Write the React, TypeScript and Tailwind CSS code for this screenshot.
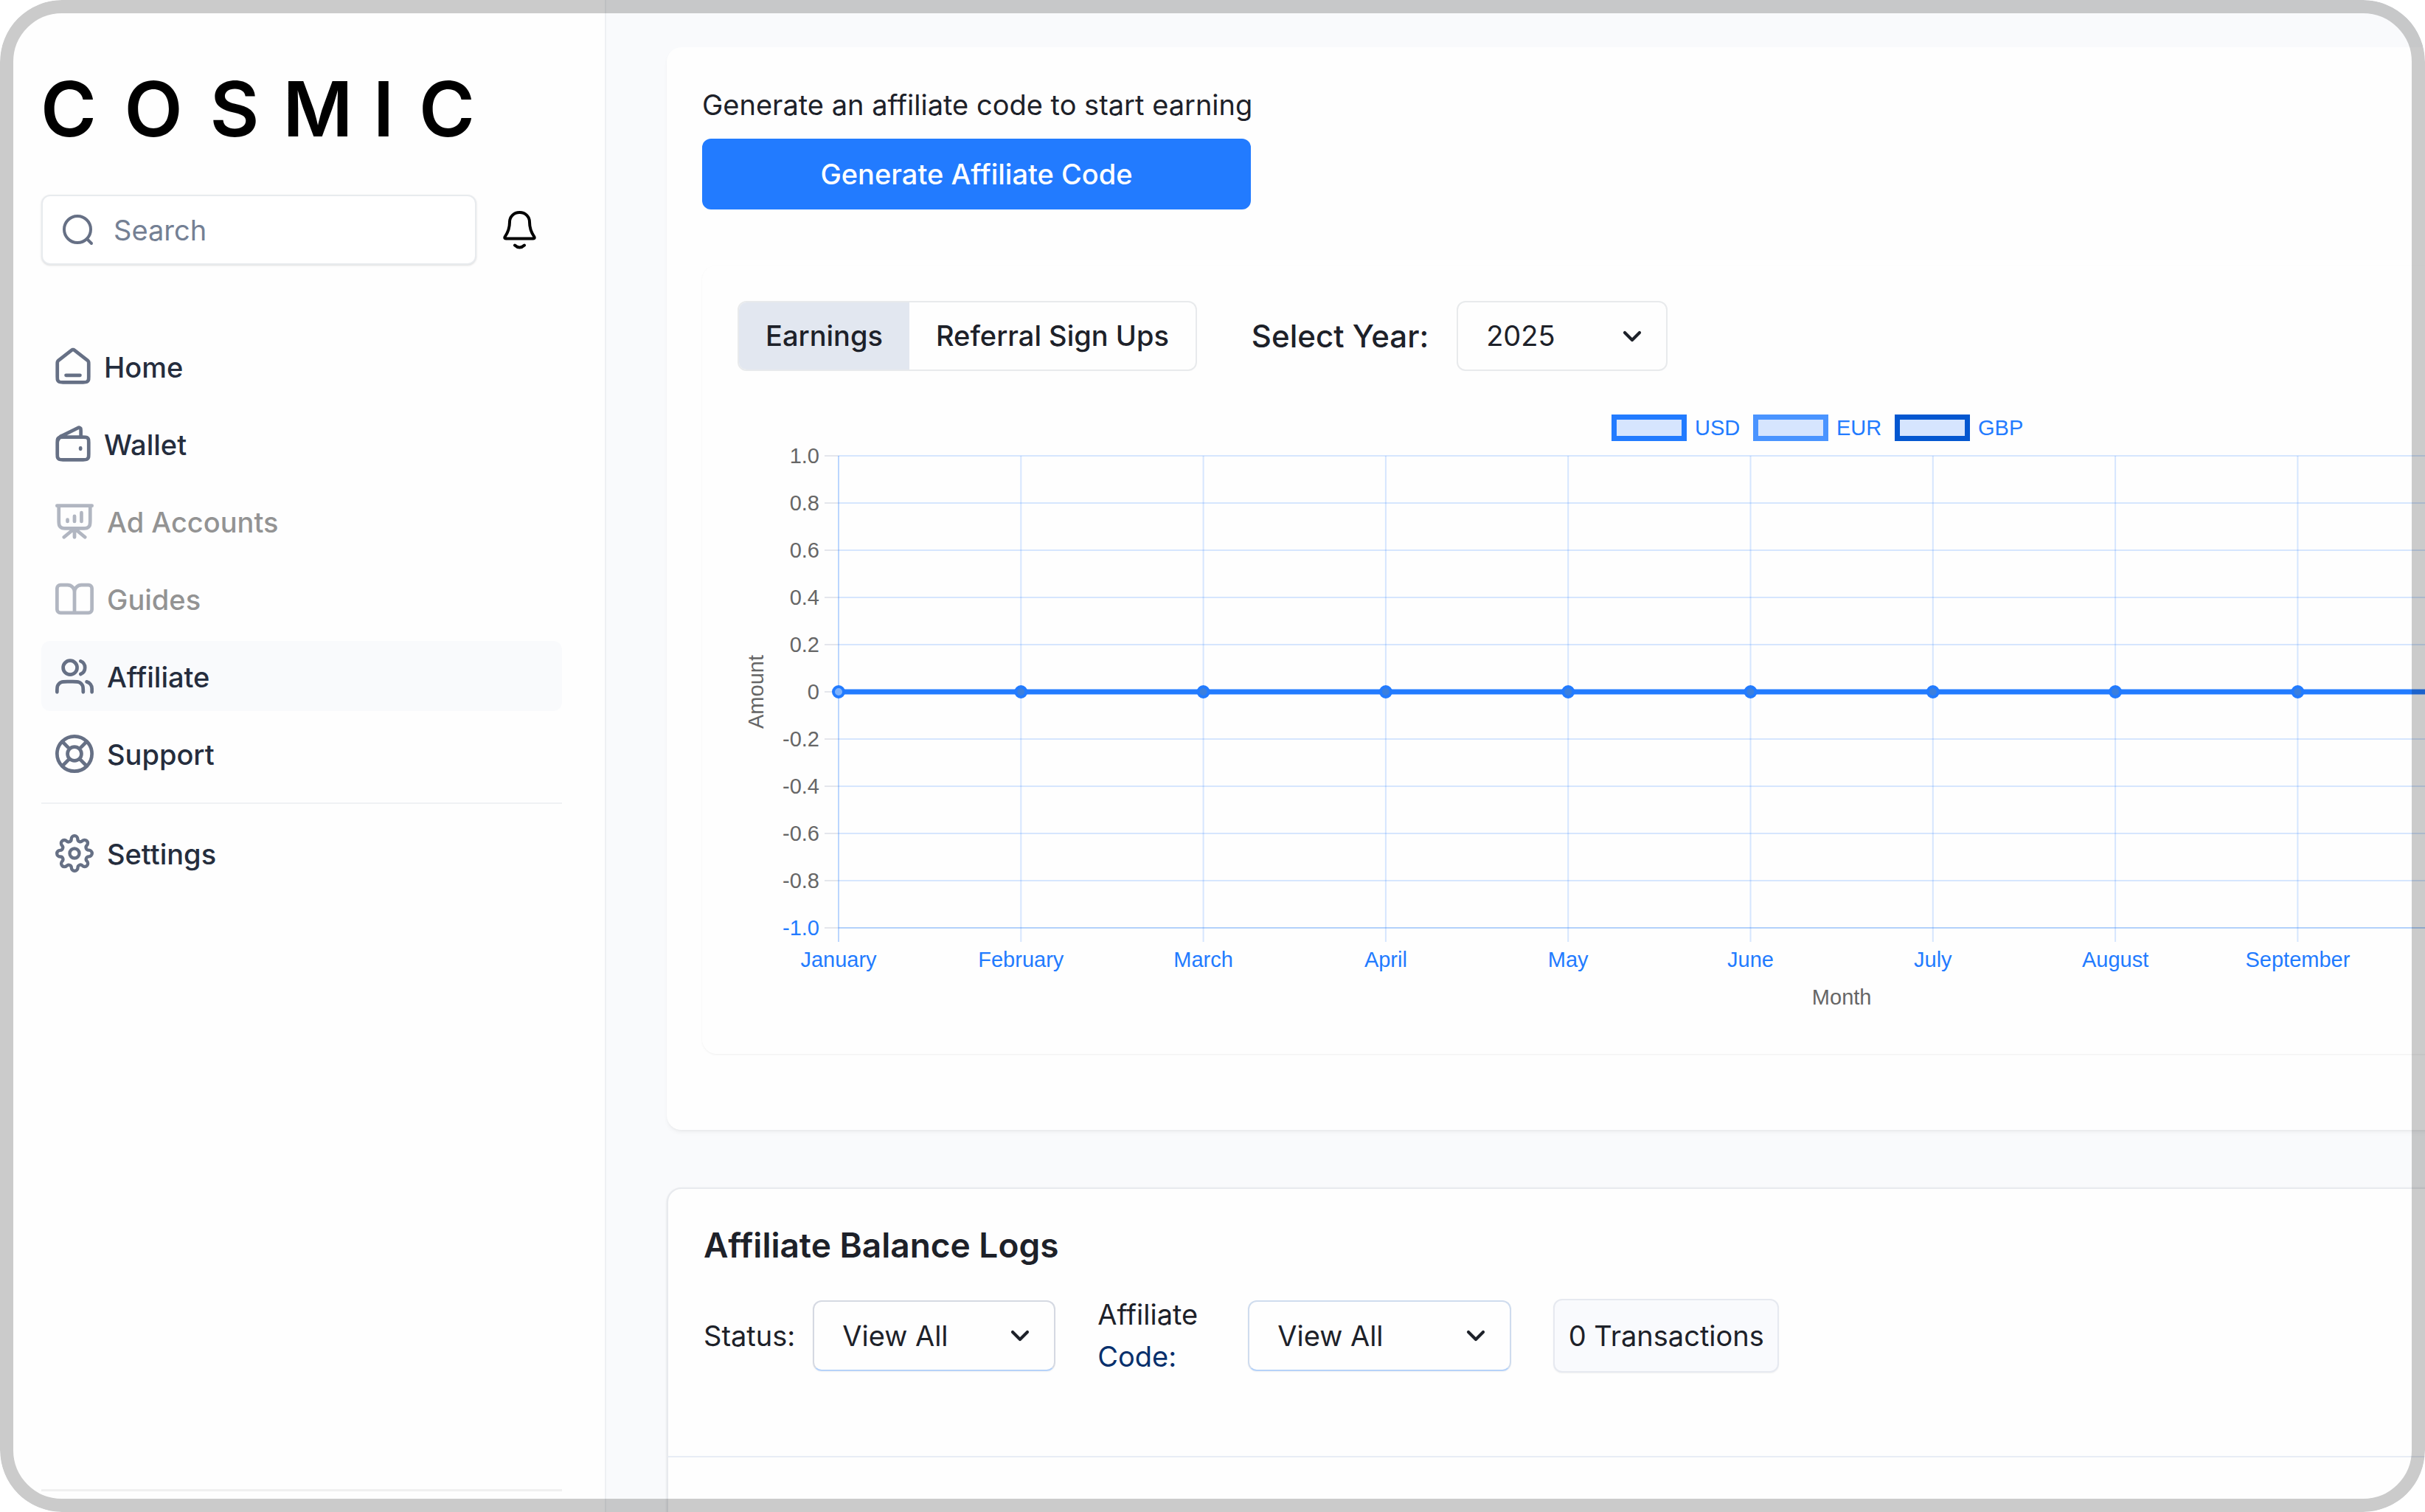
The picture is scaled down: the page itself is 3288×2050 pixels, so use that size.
import type { ReactNode } from "react";
import { ChevronDown } from "lucide-react";

const HOME =
  "M8 17H16M11.0177 2.764L4.23539 8.03912C3.78202 8.39175 3.55534 8.56806 3.39203 8.78886C3.24737 8.98444 3.1396 9.20478 3.07403 9.43905C3 9.70352 3 9.9907 3 10.5651V17.8C3 18.9201 3 19.4801 3.21799 19.908C3.40973 20.2843 3.71569 20.5903 4.09202 20.782C4.51984 21 5.07989 21 6.2 21H17.8C18.9201 21 19.4802 21 19.908 20.782C20.2843 20.5903 20.5903 20.2843 20.782 19.908C21 19.4801 21 18.9201 21 17.8V10.5651C21 9.9907 21 9.70352 20.926 9.43905C20.8604 9.20478 20.7526 8.98444 20.6079 8.78886C20.4447 8.56806 20.218 8.39175 19.7646 8.03913L12.9823 2.764C12.631 2.49075 12.4553 2.35412 12.2613 2.3016C12.0902 2.25526 11.9098 2.25526 11.7387 2.3016C11.5447 2.35412 11.369 2.49075 11.0177 2.764Z";
const WALLET =
  "M16.5 8V4.5C16.5 3.67 16.5 3.25 16.32 3C16.17 2.77 15.93 2.62 15.67 2.58C15.36 2.53 14.98 2.7 14.23 3.05L5.86 7.14C5.19 7.46 4.85 7.61 4.6 7.85C4.38 8.06 4.22 8.33 4.11 8.61C3.6 9.2 3 9.8 3 11.2M3 11.2V17.8C3 18.92 3 19.48 3.22 19.91C3.41 20.28 3.72 20.59 4.09 20.78C4.52 21 5.08 21 6.2 21H17.8C18.92 21 19.48 21 19.91 20.78C20.28 20.59 20.59 20.28 20.78 19.91C21 19.48 21 18.92 21 17.8V11.2C21 10.08 21 9.52 20.78 9.09C20.59 8.72 20.28 8.41 19.91 8.22C19.48 8 18.92 8 17.8 8H6.2C5.08 8 4.52 8 4.09 8.22C3.72 8.41 3.41 8.72 3.22 9.09C3 9.52 3 10.08 3 11.2ZM16.3 14.3V14.9";
const PRESENTATION =
  "M12 16V21M12 16L18 21M12 16L6 21M8 11V12M12 9V12M16 7V12M22 3H2M21 3V11.2C21 12.88 21 13.72 20.673 14.362C20.385 14.927 19.927 15.385 19.362 15.673C18.72 16 17.88 16 16.2 16H7.8C6.12 16 5.28 16 4.638 15.673C4.073 15.385 3.615 14.927 3.327 14.362C3 13.72 3 12.88 3 11.2V3";
const BOOK =
  "M12 20V8A4 4 0 0 0 8 4H4A2 2 0 0 0 2 6V18A2 2 0 0 0 4 20H20A2 2 0 0 0 22 18V6A2 2 0 0 0 20 4H16A4 4 0 0 0 12 8";
const USERS =
  "M22 21V19C22 17.1362 20.7252 15.5701 19 15.126M15.5 3.29076C16.9659 3.88415 18 5.32131 18 7C18 8.67869 16.9659 10.1159 15.5 10.7092M17 21C17 19.1362 17 18.2044 16.6955 17.4693C16.2895 16.4892 15.5108 15.7105 14.5307 15.3045C13.7956 15 12.8638 15 11 15H8C6.13623 15 5.20435 15 4.46927 15.3045C3.48915 15.7105 2.71046 16.4892 2.30448 17.4693C2 18.2044 2 19.1362 2 21M13.5 7C13.5 9.20914 11.7091 11 9.5 11C7.29086 11 5.5 9.20914 5.5 7C5.5 4.79086 7.29086 3 9.5 3C11.7091 3 13.5 4.79086 13.5 7Z";
const BUOY =
  "M4.93 4.93L9.17 9.17M14.83 9.17L19.07 4.93M14.83 14.83L19.07 19.07M9.17 14.83L4.93 19.07M22 12A10 10 0 1 1 2 12A10 10 0 1 1 22 12ZM16 12A4 4 0 1 1 8 12A4 4 0 1 1 16 12Z";
const GEAR =
  "M15 12A3 3 0 1 1 9 12A3 3 0 1 1 15 12ZM19.4 15a1.65 1.65 0 0 0 .33 1.82l.06.06a2 2 0 0 1 0 2.83 2 2 0 0 1-2.83 0l-.06-.06a1.65 1.65 0 0 0-1.82-.33 1.65 1.65 0 0 0-1 1.51V21a2 2 0 0 1-2 2 2 2 0 0 1-2-2v-.09A1.65 1.65 0 0 0 9 19.4a1.65 1.65 0 0 0-1.82.33l-.06.06a2 2 0 0 1-2.83 0 2 2 0 0 1 0-2.83l.06-.06a1.65 1.65 0 0 0 .33-1.82 1.65 1.65 0 0 0-1.51-1H3a2 2 0 0 1-2-2 2 2 0 0 1 2-2h.09A1.65 1.65 0 0 0 4.6 9a1.65 1.65 0 0 0-.33-1.82l-.06-.06a2 2 0 0 1 0-2.83 2 2 0 0 1 2.83 0l.06.06a1.65 1.65 0 0 0 1.82.33H9a1.65 1.65 0 0 0 1-1.51V3a2 2 0 0 1 2-2 2 2 0 0 1 2 2v.09a1.65 1.65 0 0 0 1 1.51 1.65 1.65 0 0 0 1.82-.33l.06-.06a2 2 0 0 1 2.83 0 2 2 0 0 1 0 2.83l-.06.06a1.65 1.65 0 0 0-.33 1.82V9a1.65 1.65 0 0 0 1.51 1H21a2 2 0 0 1 2 2 2 2 0 0 1-2 2h-.09a1.65 1.65 0 0 0-1.51 1z";

function NavIcon({ d, viewBox, narrow }: { d: string; viewBox: string; narrow?: boolean }) {
  return (
    <svg
      viewBox={viewBox}
      fill="none"
      stroke="currentColor"
      strokeWidth={2}
      strokeLinecap="round"
      strokeLinejoin="round"
      aria-hidden="true"
      className={narrow ? "h-[52px] w-12 shrink-0 text-[#667085]" : "size-[52px] shrink-0 text-[#667085]"}
    >
      <path d={d} />
    </svg>
  );
}

type Item = { label: string; d: string; viewBox: string; narrow?: boolean; disabled?: boolean; active?: boolean };

const NAV: Item[] = [
  { label: "Home", d: HOME, viewBox: "2 1 20 22", narrow: true },
  { label: "Wallet", d: WALLET, viewBox: "2 1 20 22", narrow: true },
  { label: "Ad Accounts", d: PRESENTATION, viewBox: "1 1 22 22", disabled: true },
  { label: "Guides", d: BOOK, viewBox: "1 1 22 22", disabled: true },
  { label: "Affiliate", d: USERS, viewBox: "1 1 22 22", active: true },
  { label: "Support", d: BUOY, viewBox: "1 1 22 22" },
];

function NavLink({ item }: { item: Item }) {
  return (
    <a
      href="#"
      aria-current={item.active ? "page" : undefined}
      aria-disabled={item.disabled}
      className={
        "flex h-[95px] items-center gap-[18px] rounded-xl pl-[19px] text-[38px] font-medium text-[#252d3d] " +
        (item.active ? "bg-[#f9fafc] " : "") +
        (item.disabled ? "opacity-50" : "")
      }
    >
      <NavIcon d={item.d} viewBox={item.viewBox} narrow={item.narrow} />
      <span className={item.disabled ? "pt-1 text-[#2b2b2b]" : "pt-1"}>{item.label}</span>
    </a>
  );
}

function Sidebar() {
  return (
    <aside className="flex w-[822px] shrink-0 flex-col border-r-2 border-[#eef0f3] bg-[#fefefe] pr-[58px] pb-[28px] pl-[56px]">
      <svg viewBox="0 0 590 80" className="mt-[108px] h-20 w-[590px] overflow-visible" role="img" aria-label="COSMIC">
        <text
          x="37 152 262 375 464 550"
          y="77"
          textAnchor="middle"
          fontFamily="Inter, sans-serif"
          fontSize="103"
          fontWeight="600"
          fill="#000"
        >
          COSMIC
        </text>
      </svg>
      <div className="mt-[76px] flex items-center">
        <div className="flex h-[95px] w-[590px] items-center gap-6 rounded-xl border-2 border-[#e8ebee] bg-white pl-6 shadow-sm">
          <svg viewBox="0 0 24 24" fill="none" stroke="currentColor" strokeWidth="2" strokeLinecap="round" className="size-12 shrink-0 text-[#667085]" aria-hidden="true">
            <circle cx="11.5" cy="11.5" r="9" />
            <path d="M18 18l3 3" />
          </svg>
          <input
            type="text"
            aria-label="Search"
            placeholder="Search"
            className="h-full min-w-0 flex-1 bg-transparent text-[38px] text-[#252d3d] outline-none placeholder:text-[#748094]"
          />
        </div>
        <button type="button" aria-label="Notifications" className="ml-9">
          <svg viewBox="0 0 45 52" fill="none" stroke="#000" strokeWidth="4" strokeLinecap="round" strokeLinejoin="round" className="h-[52px] w-[45px]">
            <path d="M22.500 2C14.500 2 9 8 9 15C9 24 7 28.500 3 34.500C1.700 36.300 2.300 37.500 4 37.500H41C42.700 37.500 43.300 36.300 42 34.500C38 28.500 36 24 36 15C36 8 30.500 2 22.500 2Z" />
            <path d="M16 46.500Q22.500 52.500 29 46.500" />
          </svg>
        </button>
      </div>
      <nav className="mt-[90px] flex flex-1 flex-col gap-[10px]">
        {NAV.map((item) => (
          <NavLink key={item.label} item={item} />
        ))}
        <hr className="my-[9px] border-t-2 border-[#f0f2f4]" />
        <NavLink item={{ label: "Settings", d: GEAR, viewBox: "0 0 24 24" }} />
      </nav>
      <hr className="border-t-3 border-[#f0f0f0]" />
    </aside>
  );
}

function Dropdown({ id, value, box }: { id: string; value: string; box: string }) {
  return (
    <div className={"relative shrink-0 " + box}>
      <select
        id={id}
        defaultValue={value}
        className="h-full w-full appearance-none bg-transparent pl-[38px] text-[38px] text-[#1d2129] outline-none"
      >
        <option>{value}</option>
      </select>
      <ChevronDown className="pointer-events-none absolute inset-y-0 right-[26px] my-auto size-10 text-[#1d2129]" strokeWidth={2.5} aria-hidden="true" />
    </div>
  );
}

const MONTHS = ["January", "February", "March", "April", "May", "June", "July", "August", "September", "October", "November", "December"];
const LEVELS = ["1.0", "0.8", "0.6", "0.4", "0.2", "0", "-0.2", "-0.4", "-0.6", "-0.8", "-1.0"];
const SERIES = [
  { name: "USD", color: "#227bff" },
  { name: "EUR", color: "#4a94ff" },
  { name: "GBP", color: "#0457d0" },
];
const LEFT = 137;
const TOP = 77;
const COL = 247.3;
const ROW = 64;
const BOTTOM = TOP + ROW * 10;
const RIGHT = LEFT + COL * 11;
const ZERO = TOP + ROW * 5;

function EarningsChart(): ReactNode {
  return (
    <svg width="2928" height="840" viewBox="0 0 2928 840" fontFamily="'Liberation Sans', Arial, sans-serif" fontSize="29" role="img" aria-label="Earnings per month">
      {SERIES.map((s, i) => (
        <g key={s.name}>
          <rect x={1188.5 + i * 192} y="24.5" width="95" height="29" fill="#d6e5fe" stroke={s.color} strokeWidth="7" />
          <text x={1298 + i * 192} y="49" fill="#227bff">{s.name}</text>
        </g>
      ))}
      {LEVELS.map((level, i) => (
        <g key={level}>
          <path d={`M${LEFT - 19} ${TOP + i * ROW}H${LEFT}`} stroke="#e4e6ec" strokeWidth="2" />
          <path d={`M${LEFT} ${TOP + i * ROW}H${RIGHT}`} stroke={i === 10 ? "#b3d1fb" : "#227bff"} strokeOpacity={i === 10 ? 1 : 0.18} strokeWidth="2" />
          <text x="111" y={TOP + i * ROW + 10} textAnchor="end" fill={i === 10 ? "#227bff" : "#666"}>{level}</text>
        </g>
      ))}
      {MONTHS.map((month, i) => (
        <g key={month}>
          <path d={`M${LEFT + i * COL} ${TOP}V${BOTTOM + 19}`} stroke="#227bff" strokeOpacity={i === 0 ? 0.3 : 0.18} strokeWidth="2" />
          <text x={LEFT + i * COL} y={BOTTOM + 53} textAnchor="middle" fill="#227bff">{month}</text>
        </g>
      ))}
      <path d={`M${LEFT} ${ZERO}H${RIGHT}`} stroke="#227bff" strokeWidth="7" />
      {MONTHS.map((month, i) => (
        <circle key={month} cx={LEFT + i * COL} cy={ZERO} r="7" fill={i === 0 ? "#7eb2fc" : "#3a7fdf"} stroke="#227bff" strokeWidth="4" />
      ))}
      <text x={(LEFT + RIGHT) / 2} y={BOTTOM + 104} textAnchor="middle" fill="#666">Month</text>
      <text transform={`translate(35 ${ZERO}) rotate(-90)`} textAnchor="middle" fill="#666">Amount</text>
    </svg>
  );
}

export default function App() {
  return (
    <div className="relative flex h-screen w-full overflow-hidden rounded-[84px] bg-[#f9fafc] font-['Inter',sans-serif] text-[#1d2129]">
      <Sidebar />
      <main className="flex min-w-0 flex-1 flex-col items-start gap-[78px] pt-16 pl-[82px]">
        <section className="w-max rounded-[20px] bg-[#fefefe] px-12 pt-[50px] pb-[103px] shadow-md shadow-black/5">
          <div className="flex w-[744px] flex-col gap-[18px]">
            <p className="text-center text-[38px] leading-[56px] whitespace-nowrap">Generate an affiliate code to start earning</p>
            <button type="button" className="h-24 rounded-xl bg-[#227bff] text-[38px] font-medium text-white">
              Generate Affiliate Code
            </button>
          </div>
          <div className="mt-[76px] rounded-[20px] px-12 pt-12 pb-12 shadow-sm shadow-black/5">
            <div className="flex items-center">
              <div role="tablist" className="flex h-[95px] overflow-hidden rounded-xl border-2 border-[#e8eaec]">
                <button role="tab" aria-selected="true" type="button" className="bg-[#e2e7f0] px-9 text-[38px] font-medium">
                  Earnings
                </button>
                <button role="tab" aria-selected="false" type="button" className="px-9 text-[38px] font-medium">
                  Referral Sign Ups
                </button>
              </div>
              <label htmlFor="year" className="mr-[38px] ml-[74px] text-[42px] font-medium">
                Select Year:
              </label>
              <Dropdown id="year" value="2025" box="h-[95px] w-[286px] rounded-xl border-2 border-[#e8eaec]" />
            </div>
            <div className="mt-[38px]">
              <EarningsChart />
            </div>
          </div>
        </section>
        <section className="min-h-[500px] w-[3120px] rounded-[20px] border-2 border-[#e8eaee] bg-[#fefefe] shadow-sm">
          <h2 className="px-12 pt-[46px] text-[46px] leading-[60px] font-semibold">Affiliate Balance Logs</h2>
          <div className="mt-[36px] flex h-[114px] items-center px-12 text-[38px]">
            <label htmlFor="status" className="mr-6">Status:</label>
            <Dropdown id="status" value="View All" box="h-24 w-[329px] rounded-xl border-2 border-[#d5d9e2] border-b-[#b6d2f8] shadow-xs" />
            <label htmlFor="code" className="ml-[57px] w-[204px] leading-[57px]">
              Affiliate <span className="block text-[#07306c]">Code:</span>
            </label>
            <Dropdown id="code" value="View All" box="h-24 w-[357px] rounded-xl border-2 border-[#cfdcee] border-b-[#b6d2f8] shadow-xs" />
            <p className="ml-[57px] flex h-[100px] w-[306px] items-center justify-center rounded-xl border-2 border-[#e6e9f0] bg-[#f9fafd] shadow-xs">
              0 Transactions
            </p>
          </div>
          <hr className="mt-[106px] border-t-2 border-[#e8edf5]" />
        </section>
      </main>
      <div className="pointer-events-none absolute inset-0 rounded-[84px] border-[18px] border-black/20" />
    </div>
  );
}
